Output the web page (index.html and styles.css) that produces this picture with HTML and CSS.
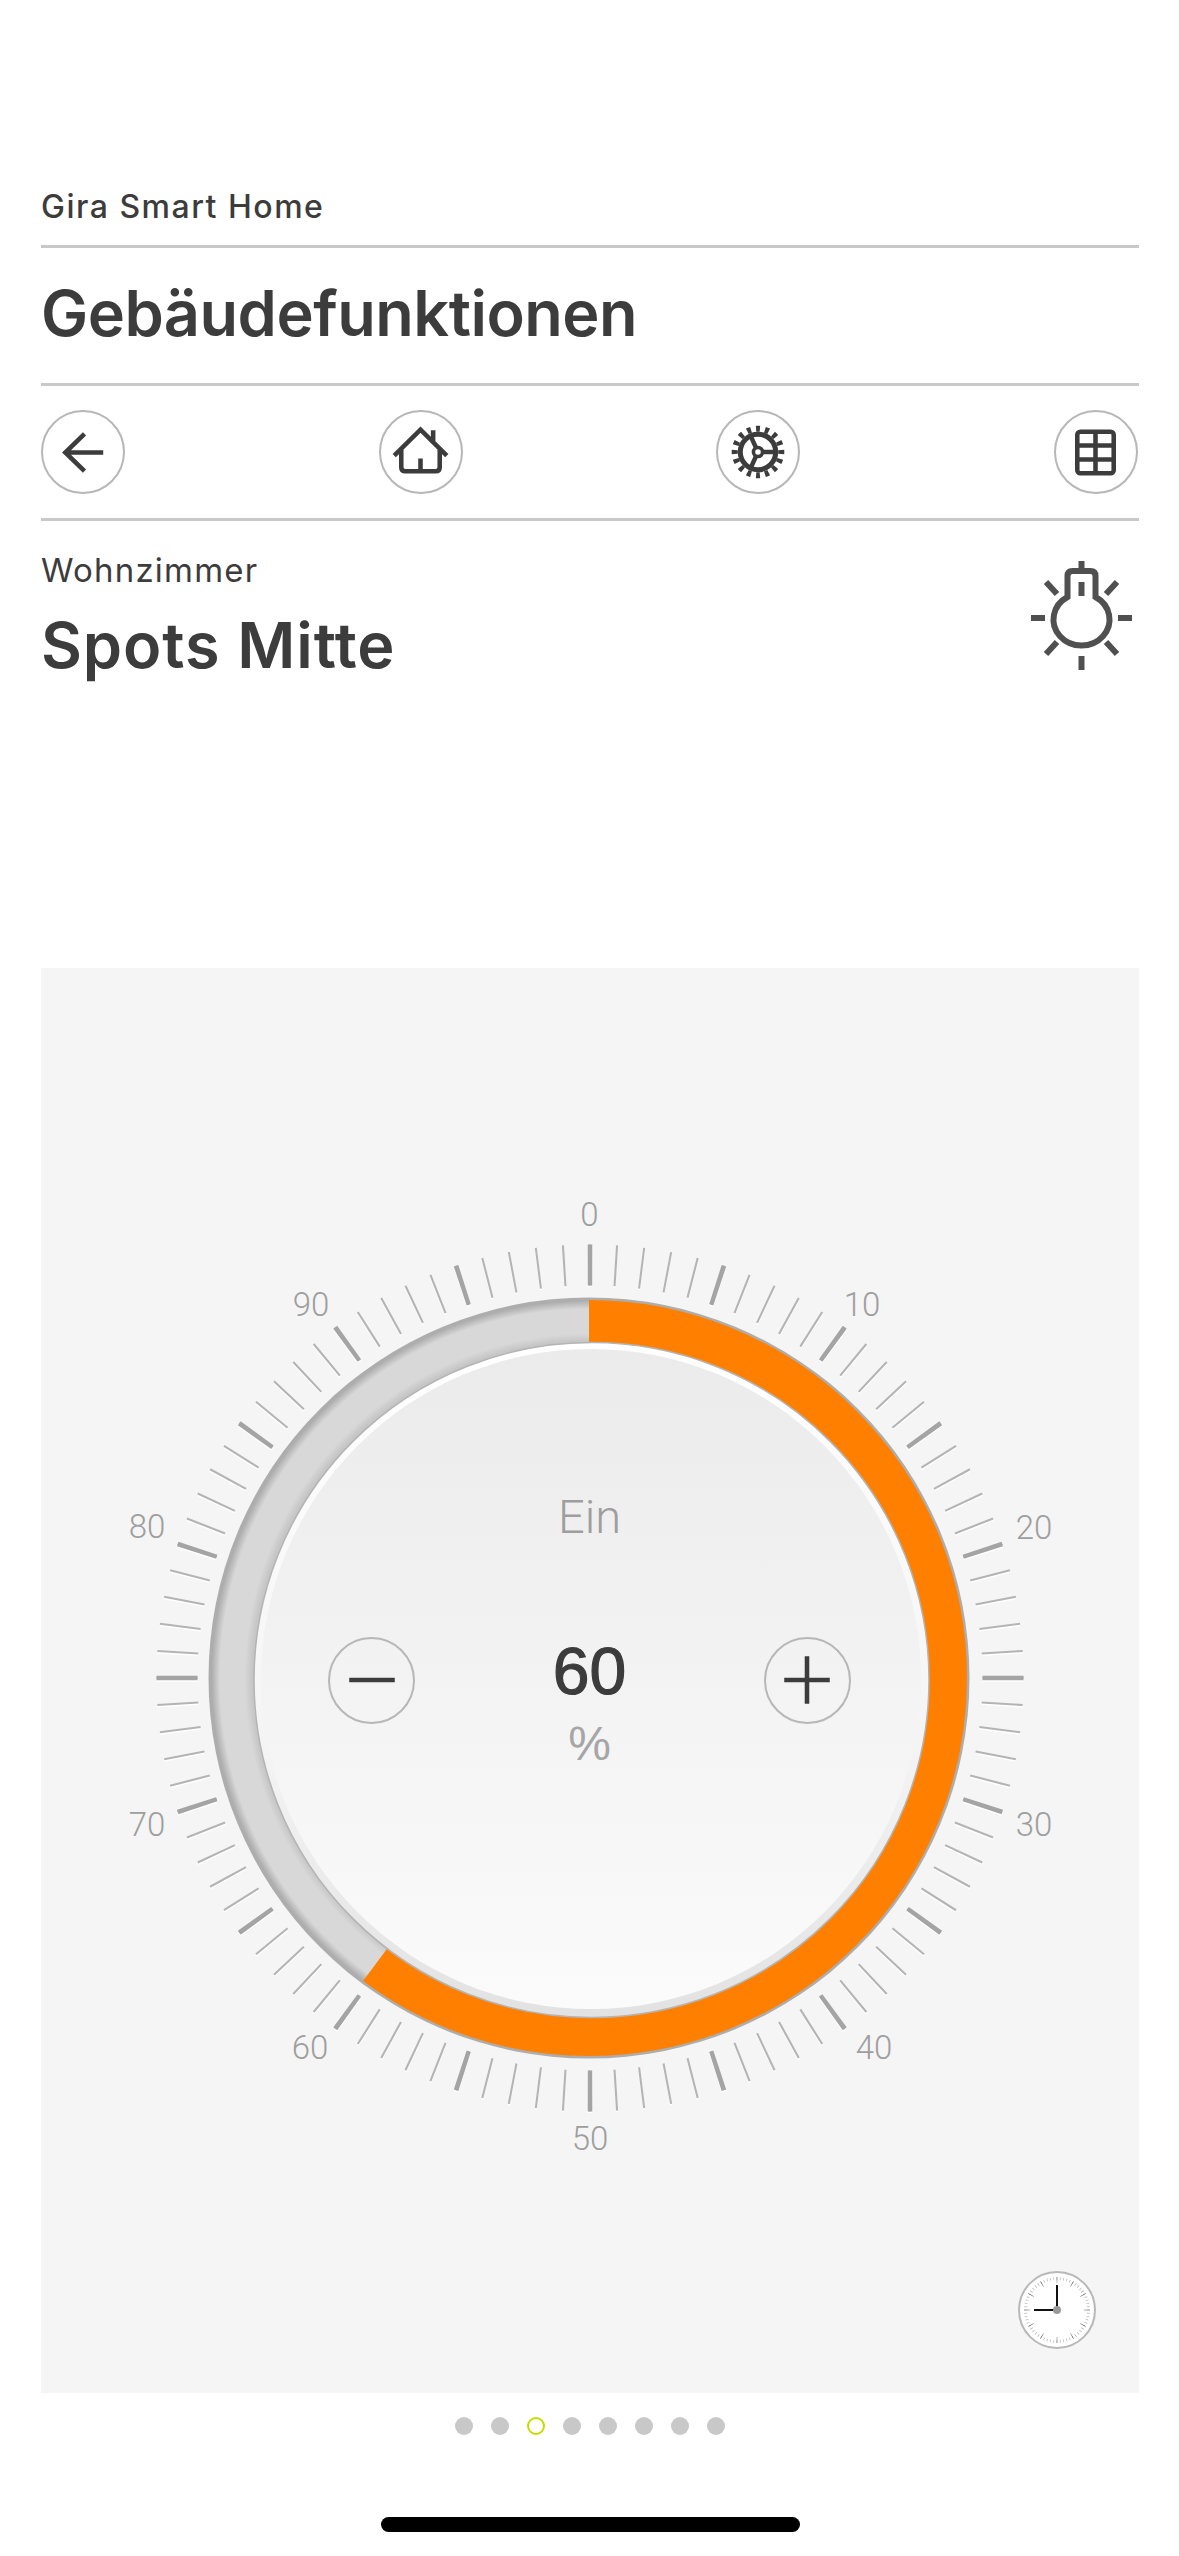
FILE: index.html
```html
<!DOCTYPE html>
<html lang="de">
<head>
<meta charset="UTF-8">
<meta name="viewport" content="width=device-width, initial-scale=1.0">
<title>Gira Smart Home</title>
<link rel="stylesheet" href="styles.css">
</head>
<body>
<div class="screen">
    <div class="app-name">Gira Smart Home</div>
    <h1 class="section-title">Gebäudefunktionen</h1>

    <nav class="toolbar">
        <button class="round-btn" aria-label="Zurück">
            <svg class="icon" viewBox="0 0 84 84"><path d="M61.500 42H24M43 23.500 24 42l19 18.500"/></svg>
        </button>
        <button class="round-btn" aria-label="Start">
            <svg class="icon" viewBox="0 0 84 84"><path d="M16 45 42 19.500 68 45M23 37v19.500q0 4 4 4h30q4 0 4-4V37M42 60V48M54.500 20v13"/></svg>
        </button>
        <button class="round-btn" aria-label="Einstellungen">
            <svg class="icon" viewBox="0 0 84 84">
                <circle class="gear-teeth" cx="41.500" cy="41.500" r="23" pathLength="16"/>
                <circle class="gear-ring" cx="41.500" cy="41.500" r="17.500"/>
                <path d="M46 41.500h12M39.600 37.400 34.200 25.600M39.600 45.600 34.200 57.400"/>
                <circle class="gear-hub" cx="41.500" cy="41.500" r="4.500"/>
            </svg>
        </button>
        <button class="round-btn" aria-label="Übersicht">
            <svg class="icon" viewBox="0 0 84 84"><rect x="24" y="21.500" width="36" height="41" rx="3"/><path d="M42 21.500v41M24 35h36M24 49h36"/></svg>
        </button>
    </nav>

    <div class="device-head">
        <div>
            <div class="room-name">Wohnzimmer</div>
            <h2 class="device-name">Spots Mitte</h2>
        </div>
        <svg class="bulb" viewBox="0 0 101 109">
            <path d="M50.500 0v9M36.500 36V15q0-5 5-5h18q5 0 5 5v21A28 26 0 1 1 36.500 36Z"/>
            <path d="M50.500 21v14M15 21 26 33M86 21 75 33M0 57h14M87 57h14M15 93l11-12M86 93 75 81M50.500 95v14"/>
        </svg>
    </div>

    <section class="panel">
        <div class="dial">
            <svg class="dial-svg" viewBox="0 0 1097 1100">
                <defs>
                    <radialGradient id="trackFill" gradientUnits="userSpaceOnUse" cx="548" cy="550" r="380.500">
                        <stop offset="0.885" stop-color="#c6c6c6"/>
                        <stop offset="0.905" stop-color="#d8d8d8"/>
                        <stop offset="0.97" stop-color="#d8d8d8"/>
                        <stop offset="0.992" stop-color="#adadad"/>
                        <stop offset="1" stop-color="#adadad"/>
                    </radialGradient>
                    <linearGradient id="rimFill" x1="0" y1="0" x2="0" y2="1">
                        <stop offset="0" stop-color="#ffffff"/>
                        <stop offset="0.6" stop-color="#f4f4f4"/>
                        <stop offset="1" stop-color="#e2e2e2"/>
                    </linearGradient>
                    <linearGradient id="faceFill" x1="0" y1="0" x2="0" y2="1">
                        <stop offset="0" stop-color="#ebebeb"/>
                        <stop offset="1" stop-color="#fbfbfb"/>
                    </linearGradient>
                </defs>
                <g class="ticks-shadow">
                    <circle class="ticks-minor" cx="549" cy="550" r="413" pathLength="100"/>
                    <circle class="ticks-major" cx="549" cy="550" r="413" pathLength="20"/>
                </g>
                <circle class="ticks-minor" cx="549" cy="550" r="413" pathLength="100"/>
                <circle class="ticks-major" cx="549" cy="550" r="413" pathLength="20"/>
                <g class="scale-labels">
                    <text x="548.500" y="98">0</text>
                    <text x="821" y="188">10</text>
                    <text x="993" y="410.500">20</text>
                    <text x="993" y="707.500">30</text>
                    <text x="833" y="931">40</text>
                    <text x="549" y="1022">50</text>
                    <text x="269" y="931">60</text>
                    <text x="106" y="707.500">70</text>
                    <text x="106" y="409.500">80</text>
                    <text x="270" y="188">90</text>
                </g>
                <circle cx="548" cy="550" r="380.500" fill="url(#trackFill)"/>
                <circle class="level" cx="548" cy="550" r="356.500" pathLength="100" transform="rotate(-90 548 550)"/>
                <circle class="face-rim" cx="550.500" cy="552" r="337.500"/>
                <circle cx="550" cy="551" r="330" fill="url(#faceFill)"/>
            </svg>
            <div class="face">
                <div class="state">Ein</div>
                <div class="face-row">
                    <button class="round-btn step-btn" aria-label="Weniger">
                        <svg class="icon" viewBox="0 0 87 87"><path d="M21 43.500h45"/></svg>
                    </button>
                    <div class="readout">
                        <div class="value">60</div>
                        <div class="unit">%</div>
                    </div>
                    <button class="round-btn step-btn" aria-label="Mehr">
                        <svg class="icon" viewBox="0 0 87 87"><path d="M21 43.500h45M43.500 20v47"/></svg>
                    </button>
                </div>
            </div>
        </div>

        <svg class="clock" viewBox="0 0 80 80">
            <circle class="clock-face" cx="40" cy="40" r="38"/>
            <circle class="clock-min" cx="40" cy="40" r="31.500" pathLength="60"/>
            <circle class="clock-hour" cx="40" cy="40" r="30" pathLength="12"/>
            <path class="clock-hands" d="M40 15v25H17"/>
            <circle class="clock-hub" cx="40" cy="40" r="4"/>
        </svg>
    </section>

    <div class="pager">
        <span class="dot"></span>
        <span class="dot"></span>
        <span class="dot active"></span>
        <span class="dot"></span>
        <span class="dot"></span>
        <span class="dot"></span>
        <span class="dot"></span>
        <span class="dot"></span>
    </div>

    <div class="home-bar"></div>
</div>
</body>
</html>
```
FILE: styles.css
```css
* {
    box-sizing: border-box;
}
body {
    margin: 0;
    background-color: #fff;
    font-family: Inter, "Liberation Sans", sans-serif;
    color: #3c3c3c;
}
h1, h2 {
    margin: 0;
    font-weight: 600;
}
.screen {
    width: 1179px;
    height: 2556px;
    padding: 187px 40px 0 41px;
    overflow: hidden;
}

/* header */
.app-name {
    height: 61px;
    border-bottom: 3px solid #c8c8c8;
    font-size: 32px;
    font-weight: 500;
    letter-spacing: 1.500px;
    line-height: 40px;
}
.section-title {
    height: 138px;
    border-bottom: 3px solid #c8c8c8;
    font-size: 63px;
    letter-spacing: -0.5px;
    line-height: 131px;
}
.toolbar {
    height: 135px;
    padding-right: 1px;
    display: flex;
    justify-content: space-between;
    align-items: center;
    border-bottom: 3px solid #c8c8c8;
}
.round-btn {
    width: 84px;
    height: 84px;
    padding: 0;
    border: 2.500px solid #b7b7b7;
    border-radius: 50%;
    background: transparent;
    display: flex;
}
.icon {
    flex: none;
    width: calc(100% + 5px);
    height: calc(100% + 5px);
    margin: -2.500px;
    fill: none;
    stroke: #3c3c3c;
    stroke-width: 4.500;
}
.gear-teeth {
    stroke-width: 6;
    stroke-dasharray: 0.44 0.56;
    stroke-dashoffset: 0.22;
}
.gear-ring {
    stroke-width: 5;
}
.gear-hub {
    fill: #fff;
    stroke-width: 3.500;
}
.device-head {
    height: 447px;
    padding: 29px 7px 0 0;
    display: flex;
    justify-content: space-between;
    align-items: flex-start;
}
.room-name {
    font-size: 33px;
    letter-spacing: 1.200px;
    line-height: 40px;
}
.device-name {
    margin-top: 17px;
    font-size: 63px;
    letter-spacing: 0.900px;
    line-height: 76px;
}
.bulb {
    width: 101px;
    height: 109px;
    margin-top: 11px;
    fill: none;
    stroke: #505050;
    stroke-width: 6;
}

/* dial */
.panel {
    position: relative;
    height: 1425px;
    padding-top: 159.500px;
    background-color: #f5f5f5;
}
.dial {
    position: relative;
    height: 1100px;
}
.dial-svg {
    display: block;
    width: 1097px;
    height: 1100px;
}
.ticks-minor,
.ticks-major {
    fill: none;
    stroke-width: 41px;
}
.ticks-minor {
    stroke: #b4b4b4;
    stroke-dasharray: 0.08 0.92;
    stroke-dashoffset: 0.04;
}
.ticks-major {
    stroke: #a4a4a4;
    stroke-dasharray: 0.035 0.965;
    stroke-dashoffset: 0.0175;
}
.ticks-shadow {
    transform: translateY(1.500px);
}
.ticks-shadow circle {
    stroke: #fff;
}
.scale-labels text {
    fill: #9e9e9e;
    font-family: Roboto, sans-serif;
    font-size: 33px;
    font-weight: 300;
    text-anchor: middle;
}
.level {
    fill: none;
    stroke: #ff8000;
    stroke-width: 43px;
    stroke-dasharray: 60.2 39.800;
}
.face-rim {
    fill: url(#rimFill);
    stroke: #b4b4b4;
    stroke-width: 1.500px;
}
.face {
    position: absolute;
    left: 219px;
    top: 221px;
    width: 659px;
    height: 659px;
    padding-top: 138px;
    display: flex;
    flex-direction: column;
    align-items: center;
    font-family: "Liberation Sans", sans-serif;
}
.state {
    color: #9e9e9e;
    font-family: Roboto, sans-serif;
    font-size: 47px;
    font-weight: 300;
    line-height: 60px;
}
.face-row {
    width: 100%;
    margin-top: 88px;
    padding: 0 68px;
    display: flex;
    justify-content: space-between;
    align-items: flex-start;
}
.step-btn {
    width: 87px;
    height: 87px;
    margin-top: 2px;
}
.readout {
    text-align: center;
}
.value {
    font-size: 66px;
    line-height: 72px;
    -webkit-text-stroke: 1.200px #3c3c3c;
}
.unit {
    margin-top: 7px;
    color: #a6a6a6;
    font-size: 48px;
    line-height: 60px;
}

/* clock button */
.clock {
    position: absolute;
    right: 42px;
    bottom: 43px;
    width: 80px;
    height: 80px;
}
.clock-face {
    fill: #fff;
    stroke: #b8b8b8;
    stroke-width: 2px;
}
.clock-min,
.clock-hour {
    fill: none;
}
.clock-min {
    stroke: #b0b0b0;
    stroke-width: 3px;
    stroke-dasharray: 0.2 0.8;
    stroke-dashoffset: 0.1;
}
.clock-hour {
    stroke: #555;
    stroke-width: 6px;
    stroke-dasharray: 0.03 0.97;
    stroke-dashoffset: 0.015;
}
.clock-hands {
    fill: none;
    stroke: #111;
    stroke-width: 2px;
}
.clock-hub {
    fill: #999;
}

/* footer */
.pager {
    margin-top: 24px;
    display: flex;
    justify-content: center;
    gap: 18px;
}
.dot {
    width: 18px;
    height: 18px;
    border-radius: 50%;
    background-color: #c8c8c8;
}
.dot.active {
    border: 2px solid #c6dc00;
    background-color: #fff;
}
.home-bar {
    width: 419px;
    height: 15px;
    margin: 82px auto 0;
    border-radius: 8px;
    background-color: #000;
}
```
